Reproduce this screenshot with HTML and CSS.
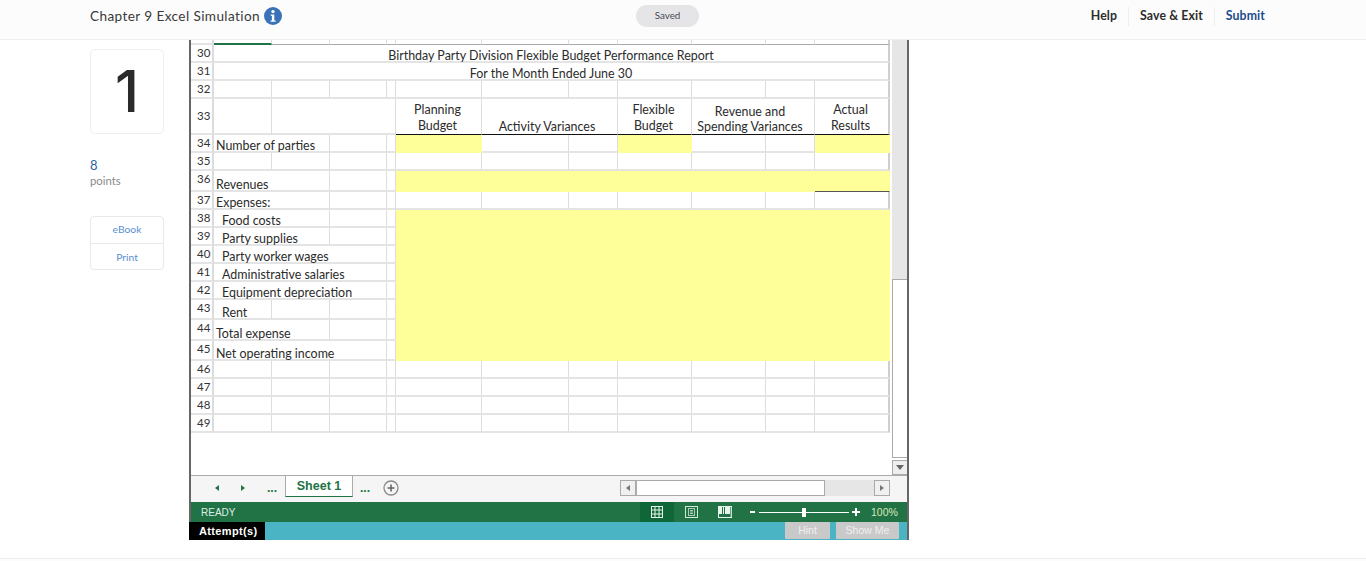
FILE: index.html
```html
<!DOCTYPE html>
<html lang="en">
<head>
<meta charset="utf-8">
<title>Chapter 9 Excel Simulation</title>
<link rel="stylesheet" href="styles.css">
</head>
<body>
<header class="topbar">
  <div class="title-wrap">
    <span class="title">Chapter 9 Excel Simulation</span>
    <svg class="info" viewBox="0 0 18 18" width="18" height="18"><circle cx="9" cy="9" r="9" fill="#3a72b8"/><circle cx="9" cy="4.6" r="1.7" fill="#fff"/><path d="M6.6 7.4h3.7v6h1.3v1.4H6.6v-1.4h1.3V8.800H6.600z" fill="#fff"/></svg>
  </div>
  <div class="saved">Saved</div>
  <nav class="actions">
    <a class="action">Help</a>
    <a class="action">Save &amp; Exit</a>
    <a class="action submit">Submit</a>
  </nav>
</header>
<main class="content">
  <aside class="side">
    <div class="qnum">1</div>
    <div class="pts">8</div>
    <div class="pts-label">points</div>
    <div class="side-links">
      <a class="side-link">eBook</a>
      <a class="side-link">Print</a>
    </div>
  </aside>
  <section class="excel">
    <div class="sheet-area">
      <div class="sheet-scroll">
        <table class="sheet">
          <colgroup>
            <col class="c-rh"><col class="c-a"><col class="c-b"><col class="c-c"><col class="c-d"><col class="c-e"><col class="c-f"><col class="c-g"><col class="c-h"><col class="c-i"><col class="c-j"><col class="c-k">
          </colgroup>
          <tr class="r29"><td class="rh"></td><td class="sel"></td><td></td><td></td><td></td><td></td><td></td><td></td><td></td><td></td><td></td><td class="last"></td></tr>
          <tr class="r18 top"><td class="rh">30</td><td colspan="11" class="ctr last">Birthday Party Division Flexible Budget Performance Report</td></tr>
          <tr class="r18"><td class="rh">31</td><td colspan="11" class="ctr last">For the Month Ended June 30</td></tr>
          <tr class="r18"><td class="rh">32</td><td></td><td></td><td></td><td></td><td></td><td></td><td></td><td></td><td></td><td></td><td class="last"></td></tr>
          <tr class="r36"><td class="rh">33</td><td></td><td colspan="3"></td><td class="hd up">Planning<br>Budget</td><td colspan="2" class="hd activity">Activity Variances</td><td class="hd up">Flexible<br>Budget</td><td colspan="2" class="hd revenue">Revenue and<br>Spending Variances</td><td class="hd up last">Actual<br>Results</td></tr>
          <tr class="r18"><td class="rh">34</td><td colspan="2">Number of parties</td><td></td><td></td><td class="y"></td><td></td><td></td><td class="y"></td><td></td><td></td><td class="y last"></td></tr>
          <tr class="r18"><td class="rh">35</td><td></td><td></td><td></td><td></td><td></td><td></td><td></td><td></td><td></td><td></td><td class="last"></td></tr>
          <tr class="r21"><td class="rh">36</td><td colspan="2">Revenues</td><td></td><td></td><td colspan="6" class="y"></td><td class="y last under"></td></tr>
          <tr class="r18"><td class="rh">37</td><td colspan="2">Expenses:</td><td></td><td></td><td></td><td></td><td></td><td></td><td></td><td></td><td class="last"></td></tr>
          <tr class="r18"><td class="rh">38</td><td colspan="2" class="ind">Food costs</td><td></td><td></td><td colspan="7" rowspan="8" class="y last"></td></tr>
          <tr class="r18"><td class="rh">39</td><td colspan="2" class="ind">Party supplies</td><td></td><td></td></tr>
          <tr class="r18"><td class="rh">40</td><td colspan="3" class="ind">Party worker wages</td><td></td></tr>
          <tr class="r18"><td class="rh">41</td><td colspan="3" class="ind">Administrative salaries</td><td></td></tr>
          <tr class="r18"><td class="rh">42</td><td colspan="3" class="ind">Equipment depreciation</td><td></td></tr>
          <tr class="r20"><td class="rh">43</td><td class="ind">Rent</td><td></td><td></td><td></td></tr>
          <tr class="r21"><td class="rh">44</td><td colspan="2">Total expense</td><td></td><td></td></tr>
          <tr class="r20"><td class="rh">45</td><td colspan="3">Net operating income</td><td></td></tr>
          <tr class="r18"><td class="rh">46</td><td></td><td></td><td></td><td></td><td></td><td></td><td></td><td></td><td></td><td></td><td class="last"></td></tr>
          <tr class="r18"><td class="rh">47</td><td></td><td></td><td></td><td></td><td></td><td></td><td></td><td></td><td></td><td></td><td class="last"></td></tr>
          <tr class="r18"><td class="rh">48</td><td></td><td></td><td></td><td></td><td></td><td></td><td></td><td></td><td></td><td></td><td class="last"></td></tr>
          <tr class="r18"><td class="rh">49</td><td></td><td></td><td></td><td></td><td></td><td></td><td></td><td></td><td></td><td></td><td class="last"></td></tr>
        </table>
      </div>
      <div class="vscroll">
        <div class="v-track"></div>
        <div class="v-thumb"></div>
        <div class="v-btn"><svg viewBox="0 0 8 5" width="8" height="5"><path d="M0 0h8L4 5z" fill="#666"/></svg></div>
      </div>
    </div>
    <div class="tabbar">
      <div class="tab-nav">
        <svg viewBox="0 0 4 6" width="4" height="6"><path d="M4 0v6L0 3z" fill="#217346"/></svg>
        <svg viewBox="0 0 4 6" width="4" height="6"><path d="M0 0v6l4-3z" fill="#217346"/></svg>
        <span class="dots">...</span>
      </div>
      <div class="tab">Sheet 1</div>
      <span class="dots dots-r">...</span>
      <svg class="add" viewBox="0 0 16 16" width="16" height="16"><circle cx="8" cy="8" r="7" fill="none" stroke="#8a8a8a" stroke-width="1.300"/><path d="M4.500 8h7M8 4.500v7" stroke="#666" stroke-width="1.600"/></svg>
      <div class="hscroll">
        <div class="h-btn"><svg viewBox="0 0 4 6" width="4" height="6"><path d="M4 0v6L0 3z" fill="#777"/></svg></div>
        <div class="h-thumb"></div>
        <div class="h-track"></div>
        <div class="h-btn"><svg viewBox="0 0 4 6" width="4" height="6"><path d="M0 0v6l4-3z" fill="#777"/></svg></div>
      </div>
    </div>
    <div class="status">
      <span class="ready">READY</span>
      <div class="views">
        <div class="view on"><svg viewBox="0 0 12 12" width="12" height="12"><rect x=".5" y=".5" width="11" height="11" fill="none" stroke="#e8f3ec"/><path d="M4 0v12M8 0v12M0 4h12M0 8h12" stroke="#e8f3ec"/></svg></div>
        <div class="view"><svg viewBox="0 0 13 12" width="13" height="12"><rect x=".5" y=".5" width="12" height="11" fill="none" stroke="#d5e6dc"/><rect x="3.500" y="2.500" width="6" height="7" fill="none" stroke="#a9cbb6"/><path d="M5 4.500h3M5 6h3M5 7.500h3" stroke="#a9cbb6"/></svg></div>
        <div class="view"><svg viewBox="0 0 14 12" width="14" height="12"><rect x=".5" y=".5" width="13" height="11" fill="none" stroke="#e8f3ec"/><path d="M1 0h3v8H1zM5 0h1v8H5zM7 0h5v8H7z" fill="#e8f3ec"/><path d="M13 1v10" stroke="#a9cbb6"/></svg></div>
      </div>
      <div class="zoom">
        <span class="z-minus"></span>
        <div class="z-track"><span class="z-thumb"></span></div>
        <svg viewBox="0 0 8 8" width="8" height="8"><path d="M0 4h8M4 0v8" stroke="#fff" stroke-width="2"/></svg>
      </div>
      <span class="pct">100%</span>
    </div>
    <div class="attempts">
      <span class="att-label">Attempt(s)</span>
      <div class="att-btns">
        <span class="att-btn hint">Hint</span>
        <span class="att-btn show">Show Me</span>
      </div>
    </div>
  </section>
</main>
<footer class="pagefoot"></footer>
</body>
</html>
```
FILE: styles.css
```css
* { box-sizing: border-box; }
html, body { margin: 0; padding: 0; height: 561px; overflow: hidden; background: #fff; }
body { font-family: "Open Sans", "Liberation Sans", sans-serif; color: #333; }

.topbar { height: 40px; background: #fcfcfc; border-bottom: 1px solid #eeeeee; display: flex; align-items: flex-start; padding: 0 101px 0 90px; }
.title-wrap { width: 546px; flex: none; display: flex; align-items: center; gap: 4px; height: 31px; }
.title { font-family: Lato, sans-serif; font-size: 13.6px; letter-spacing: .4px; color: #3a3a3a; }
.info { flex: none; }
.saved { width: 63px; height: 22px; margin-top: 5px; border-radius: 11px; background: #e5e5e7; font-family: Lato, sans-serif; font-size: 9.800px; color: #4a4a55; text-align: center; line-height: 20px; }
.actions { display: flex; margin-left: auto; margin-top: 7px; }
.action { font-family: Lato, sans-serif; font-size: 12.300px; letter-spacing: .1px; font-weight: 700; color: #2d2d2d; height: 19px; line-height: 18px; padding: 0 11px; border-right: 1px solid #eeeeee; }
.action.submit { border-right: 0; color: #1f4f8f; padding-right: 0; }

.content { display: flex; padding-left: 90px; height: 500px; }
.side { width: 74px; flex: none; margin-right: 25px; padding-top: 9px; }
.qnum { height: 85px; border: 1px solid #eeeeee; border-radius: 5px; font-family: Inter, Lato, sans-serif; font-size: 58px; font-weight: 500; color: #2b2b2b; text-align: center; line-height: 82px; }
.pts { margin-top: 23px; font-family: Lato, sans-serif; font-size: 13px; line-height: 16px; color: #2a62a8; }
.pts-label { font-family: Lato, sans-serif; font-size: 11.300px; line-height: 15px; color: #8a8a8a; }
.side-links { margin-top: 28px; border: 1px solid #e9e9e9; border-radius: 4px; display: flex; flex-direction: column; }
.side-link { height: 26px; font-family: Lato, sans-serif; font-size: 10.300px; color: #5b8fd0; text-align: center; line-height: 25px; }
.side-link + .side-link { border-top: 1px solid #e9e9e9; line-height: 26px; }

.excel { width: 720px; height: 500px; border-left: 2px solid #666; border-right: 2px solid #666; display: flex; flex-direction: column; }
.sheet-area { height: 435px; display: flex; background: #fff; }
.sheet-scroll { width: 701px; flex: none; overflow: hidden; }
.vscroll { width: 15px; flex: none; display: flex; flex-direction: column; background: #fff; }
.v-track { height: 239px; background: #e6e6e6; }
.v-thumb { height: 179px; background: #fff; border: 1px solid #aaa; border-right: 0; }
.v-btn { height: 15px; margin-top: 2px; background: #eeeeee; border: 1px solid #aaa; border-right: 0; display: flex; align-items: center; justify-content: center; }

.sheet { border-collapse: separate; border-spacing: 0; table-layout: fixed; width: 699px; font-family: Lato, sans-serif; font-size: 12.450px; color: #2b2b2b; }
.c-rh { width: 23px; } .c-a { width: 58px; } .c-b { width: 58px; } .c-c { width: 57px; } .c-d { width: 9px; }
.c-e { width: 86px; } .c-f { width: 87px; } .c-g { width: 49px; } .c-h { width: 74px; } .c-i { width: 74px; } .c-j { width: 49px; } .c-k { width: 75px; }
.sheet td { padding: 0 0 0 2px; border-right: 1px solid #dddddd; border-bottom: 2px solid #e4e4e4; vertical-align: bottom; white-space: nowrap; line-height: 10px; }
.r29 td { height: 5px; border-bottom: 1px solid #a9a9a9; line-height: 0; padding: 0; }
.r29 td.rh { border-bottom: 0; border-right-color: transparent; }
.r29 td.sel { border-bottom: 2px solid #217346; }
.r18 td { height: 18px; }
.r20 td { height: 20px; }
.r21 td { height: 21px; }
.r36 td { height: 36px; }
.sheet td.rh { padding: 0 0 1px 6px; width: 23px; font-size: 11.500px; line-height: 14px; color: #333; border-right: 2px solid #dcdcdc; border-bottom: 2px solid #e4e4e4; vertical-align: middle; }
.r21 td.rh, .r20 td.rh { vertical-align: top; padding-top: 1px; }
.sheet td.ctr { padding: 0; text-align: center; }
.sheet td.ind { padding-left: 8px; }
.sheet td.hd { text-align: center; padding: 0 2px 0 0; line-height: 15px; border-bottom: 1px solid #111; }
.sheet td.hd.up { line-height: 16px; }
.sheet td.activity { padding-right: 5px; }
.sheet td.revenue { padding-right: 6px; }
.sheet td.y { background: #ffff99; border-right-color: transparent; border-bottom-color: #ffff99; }
.sheet td.last { border-right: 2px solid #cfcfcf; }
.sheet td.y.last { border-right: 1px solid #ffff99; }
.sheet td.under { border-bottom: 1px solid #555; }

.tabbar { height: 27px; background: #f5f5f5; border-top: 1px solid #ababab; padding-bottom: 3px; display: flex; align-items: center; }
.tab-nav { width: 94px; flex: none; display: flex; align-items: center; justify-content: flex-end; gap: 22px; padding-right: 8px; }
.dots { font-family: "Liberation Sans", sans-serif; font-size: 12px; font-weight: 700; color: #217346; line-height: 14px; }
.tab { width: 68px; height: 22px; margin-top: -1px; flex: none; align-self: flex-start; background: #fff; border: 1px solid #ababab; border-bottom: 1px solid #217346; font-family: "Liberation Sans", sans-serif; font-size: 12.500px; font-weight: 700; color: #217346; text-align: center; line-height: 21px; }
.dots-r { margin-left: 7px; }
.add { margin-left: 13px; flex: none; }
.hscroll { width: 270px; height: 16px; margin-left: 221px; flex: none; display: flex; }
.h-btn { width: 16px; height: 16px; background: #f0f0f0; border: 1px solid #aaa; display: flex; align-items: center; justify-content: center; flex: none; }
.h-thumb { width: 189px; flex: none; background: #fff; border: 1px solid #aaa; }
.h-track { flex: 1; background: #e6e6e6; }

.status { height: 20px; flex: none; background: #217346; display: flex; align-items: center; color: #dfeee5; }
.ready { font-family: "Liberation Sans", sans-serif; font-size: 10px; padding-left: 10px; width: 449px; flex: none; }
.views { display: flex; height: 20px; flex: none; }
.view { width: 34px; height: 20px; display: flex; align-items: center; justify-content: center; }
.view.on { background: #0f6636; }
.zoom { margin-left: 8px; display: flex; align-items: center; gap: 3px; flex: none; }
.z-minus { width: 5px; height: 2px; background: #fff; margin-right: 1px; }
.z-track { width: 90px; height: 1px; background: #fff; position: relative; }
.z-thumb { position: absolute; left: 43px; top: -4px; width: 4px; height: 9px; background: #fff; }
.pct { font-family: "Liberation Sans", sans-serif; font-size: 10.500px; margin-left: 11px; color: #d8e8b8; flex: none; }

.attempts { height: 18px; flex: none; background: #4ab3c4; display: flex; justify-content: space-between; margin-left: -2px; }
.att-label { width: 76px; background: #000; color: #fff; font-family: "Liberation Sans", sans-serif; font-size: 11px; font-weight: 700; letter-spacing: .35px; padding-left: 10px; line-height: 18px; }
.att-btns { display: flex; gap: 6px; padding-right: 8px; }
.att-btn { height: 17px; background: #c9c9c9; color: #f0f0f0; font-family: "Liberation Sans", sans-serif; font-size: 10.500px; text-align: center; line-height: 17px; border-radius: 1px; }
.hint { width: 45px; }
.show { width: 63px; }

.pagefoot { margin-top: 18px; border-top: 1px solid #eeeeee; height: 3px; background: #fcfcfc; }
```
